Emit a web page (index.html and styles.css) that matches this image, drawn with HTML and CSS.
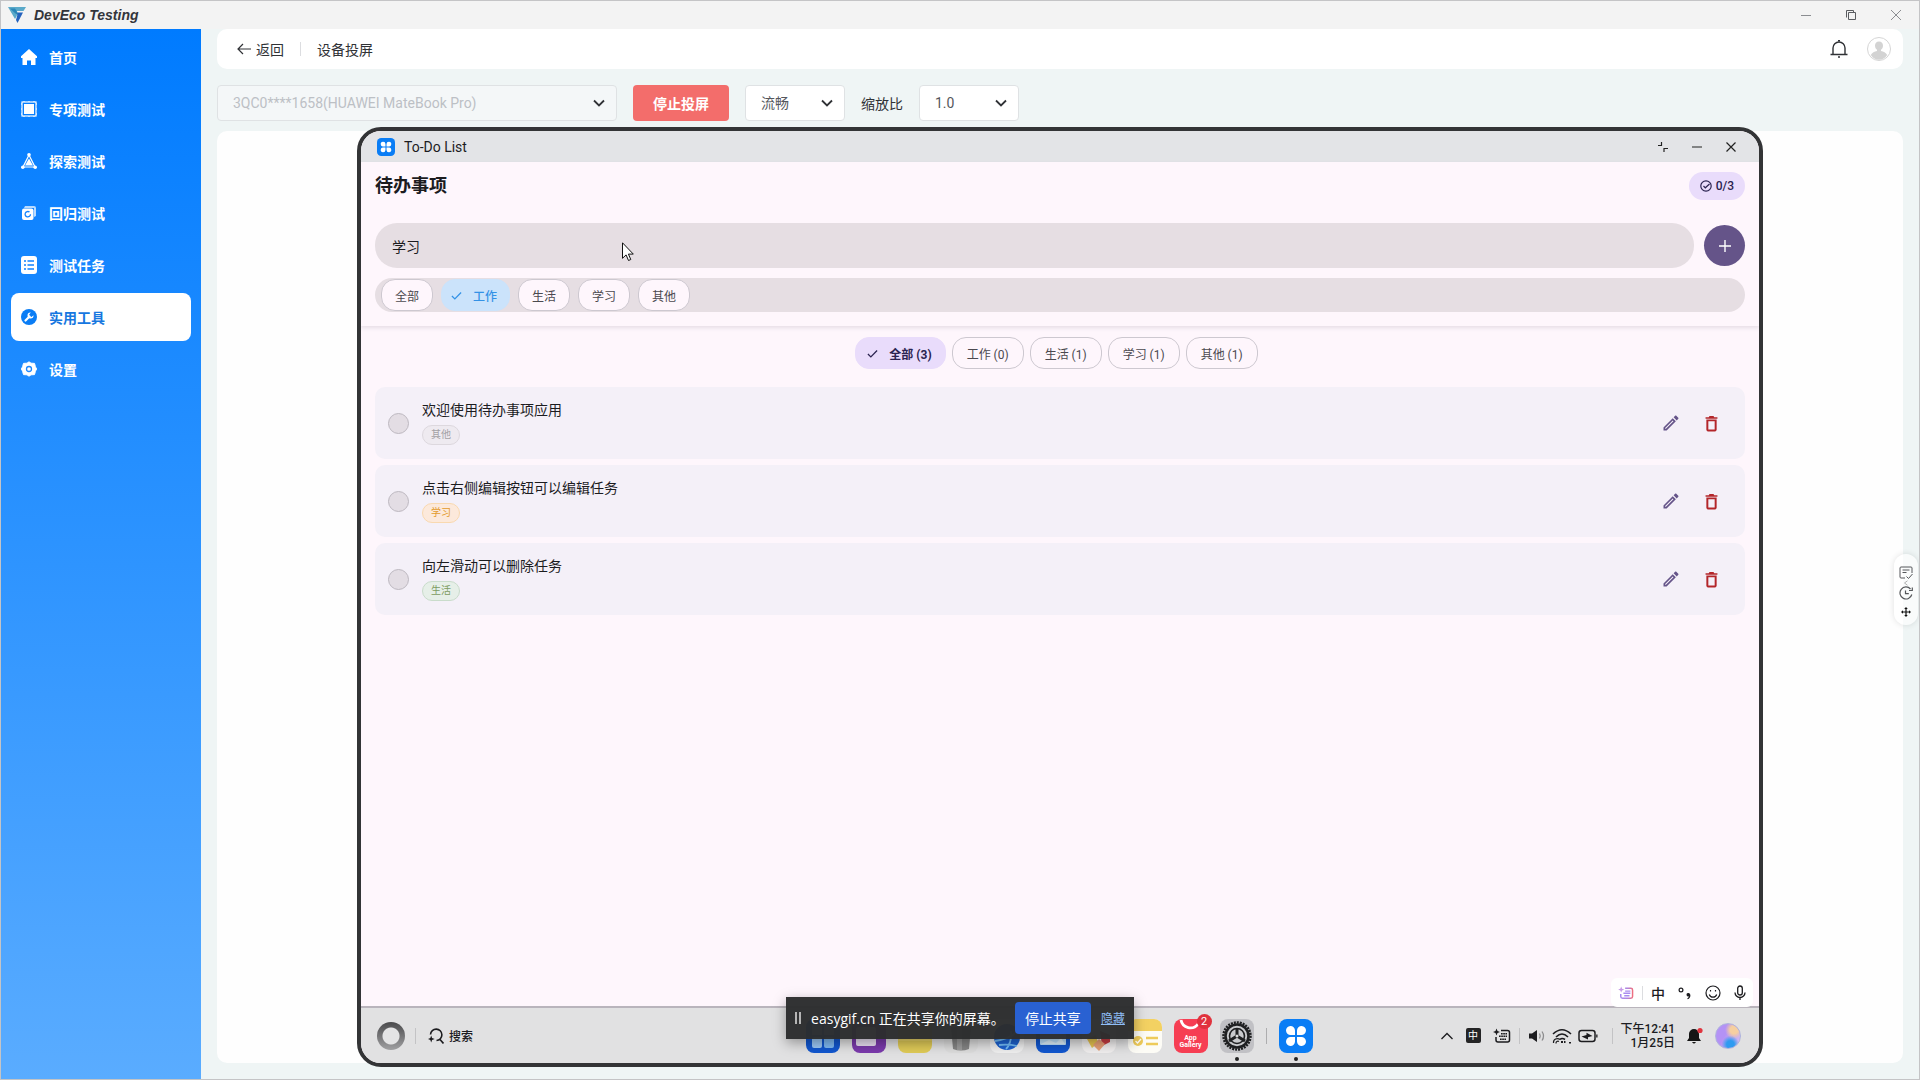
FILE: index.html
```html
<!DOCTYPE html>
<html lang="zh-CN">
<head>
    <meta charset="UTF-8">
    <meta name="viewport" content="width=device-width, initial-scale=1.0">
    <title>DevEco Testing</title>
    <link rel="stylesheet" href="styles.css">
</head>
<body>
    <!-- Shared icons -->
    <svg class="icon-defs" aria-hidden="true">
        <symbol id="i-chevron" viewBox="0 0 12 12"><path d="M1 3.5l5 5 5-5" fill="none" stroke="currentColor" stroke-width="1.8"/></symbol>
        <symbol id="i-check" viewBox="0 0 12 12"><path d="M1 6.5l3.2 3.2L11 2.8" fill="none" stroke="currentColor" stroke-width="1.4"/></symbol>
        <symbol id="i-edit" viewBox="0 0 24 24"><path d="M14.06 9.02l.92.92L5.92 19H5v-.92l9.06-9.06M17.66 3c-.25 0-.51.1-.7.29l-1.83 1.83 3.75 3.75 1.83-1.83a.996.996 0 0 0 0-1.41l-2.34-2.34c-.2-.2-.45-.29-.71-.29zm-3.6 3.19L3 17.25V21h3.75L17.81 9.94l-3.75-3.75z" fill="currentColor"/></symbol>
        <symbol id="i-trash" viewBox="0 0 24 24"><path fill-rule="evenodd" d="M5.500 20c0 1 .9 2 2 2h9c1.100 0 2-1 2-2V7h-13zM8 9.300h8v10.400H8zM15.500 4l-1-1.500h-5l-1 1.500h-4v2h15V4z" fill="currentColor"/></symbol>
        <symbol id="i-apps" viewBox="0 0 34 34">
            <rect width="34" height="34" rx="8" fill="#0a7df5"/>
            <g fill="#fff"><path d="M16 16h-4a4.500 4.500 0 1 1 4-4.500z"/><path d="M18 16h4a4.500 4.500 0 1 0-4-4.500z"/><path d="M16 18h-4a4.500 4.500 0 1 0 4 4.500z"/><path d="M18 18h4a4.500 4.500 0 1 1-4 4.500z"/></g>
        </symbol>
        <symbol id="i-keyboard" viewBox="0 0 18 16"><path d="M8 2.500h6.500a2 2 0 0 1 2 2v7.500a2 2 0 0 1-2 2H5a2 2 0 0 1-2-2V9" fill="none" stroke="currentColor" stroke-width="1.500"/><path d="M3.500.5l1 2.500 2.500 1-2.500 1-1 2.500-1-2.500L0 4l2.500-1z" fill="currentColor"/><path d="M8 5.800h6M6 8.300h8M7 11.200h6" stroke="currentColor" stroke-width="1.400" stroke-dasharray="1.700 .5"/></symbol>
        <linearGradient id="ime-gradient"><stop offset="0" stop-color="#a98bf0"/><stop offset="0.6" stop-color="#b184dd"/><stop offset="1" stop-color="#ee6f80"/></linearGradient>
    </svg>

    <header class="titlebar">
        <div class="brand">
            <svg width="18" height="16" viewBox="0 0 18 16">
                <path d="M0 0h18l-2.500 4H6.500L9 8.500 7 12z" fill="#5aa9c9"/>
                <path d="M2 1.500h5l4 6-2 .5z" fill="#2b86b8"/>
                <path d="M10 5.500h5L9.500 16 8 13z" fill="#2462bd"/>
            </svg>
            <h1>DevEco Testing</h1>
        </div>
        <div class="window-controls">
            <button type="button" aria-label="最小化"><svg width="12" height="12" viewBox="0 0 12 12"><path d="M1 6.500h10"/></svg></button>
            <button type="button" class="dark" aria-label="还原"><svg width="12" height="12" viewBox="0 0 12 12"><path d="M3.500 3.500h7v7h-7zM1.500 8.500v-7h7v2"/></svg></button>
            <button type="button" aria-label="关闭"><svg width="12" height="12" viewBox="0 0 12 12"><path d="M1 1l10 10M11 1L1 11"/></svg></button>
        </div>
    </header>

    <div class="layout">
        <nav class="sidebar">
            <a href="#home">
                <svg width="16" height="16" viewBox="0 0 16 16"><path d="M8 0L0 7.200V9h1.500v7H6v-4.500h4V16h4.500V9H16V7.200z" fill="#fff"/></svg>
                首页
            </a>
            <a href="#special">
                <svg width="16" height="16" viewBox="0 0 16 16"><rect x="1" y="1" width="14" height="14" fill="none" stroke="#fff" stroke-width="1.200"/><path d="M3 3h10v10H3z" fill="#fff"/><path d="M3 0v1M8 0v1M13 0v1M3 15v1M8 15v1M13 15v1M0 3h1M0 8h1M0 13h1M15 3h1M15 8h1M15 13h1" stroke="#fff"/></svg>
                专项测试
            </a>
            <a href="#explore">
                <svg width="16" height="16" viewBox="0 0 16 16"><path d="M8 2L2 14h12z" fill="none" stroke="#fff" stroke-width="1.200"/><path d="M8 5.500l4 7H4z" fill="#fff"/><circle cx="8" cy="1.800" r="1.800" fill="#fff"/><circle cx="1.800" cy="14.200" r="1.800" fill="#fff"/><circle cx="14.200" cy="14.200" r="1.800" fill="#fff"/></svg>
                探索测试
            </a>
            <a href="#regression">
                <svg width="16" height="16" viewBox="0 0 16 16"><path d="M4 1h9a2 2 0 0 1 2 2v8l-2 1V3H3z" fill="#b9dbff"/><rect x="1" y="3.500" width="11.500" height="11.500" rx="2" fill="#fff"/><path d="M9.500 9.200a2.700 2.700 0 1 1-1-2.100" fill="none" stroke="#1283ff" stroke-width="1.300"/></svg>
                回归测试
            </a>
            <a href="#tasks">
                <svg width="16" height="18" viewBox="0 0 16 18"><rect width="16" height="18" rx="3" fill="#fff"/><path d="M3 5h2M3 9h2M3 13h2M6.500 5H13M6.500 9H13M6.500 13H13" stroke="#1283ff" stroke-width="1.400"/></svg>
                测试任务
            </a>
            <a href="#tools" class="active">
                <svg width="16" height="16" viewBox="0 0 16 16"><circle cx="8" cy="8" r="8" fill="#0a7df5"/><path d="M4.500 11.500l4-4" stroke="#fff" stroke-width="2.200" stroke-linecap="round"/><path d="M9.800 3.500a3 3 0 1 0 2.700 2.800L10.500 8 8.700 7.300 8.200 5.500z" fill="#fff"/></svg>
                实用工具
            </a>
            <a href="#settings">
                <svg width="16" height="16" viewBox="0 0 16 16"><path d="M8 .8l2 1.400 3.500.2.900 3.300L15.600 8l-1.200 2.300-.9 3.300-3.500.2-2 1.400-2-1.400-3.500-.2-.9-3.300L.4 8l1.200-2.300.9-3.300L6 2.200z" fill="#fff" stroke="#fff" stroke-linejoin="round"/><circle cx="8" cy="8" r="2.500" fill="none" stroke="#1e88ff" stroke-width="1.300"/></svg>
                设置
            </a>
        </nav>

        <main class="content">
            <div class="page-header">
                <button type="button" class="back">
                    <svg width="14" height="12" viewBox="0 0 14 12"><path d="M14 6H1M6 1L1 6l5 5" fill="none" stroke="currentColor" stroke-width="1.200"/></svg>
                    返回
                </button>
                <span class="divider"></span>
                <h2>设备投屏</h2>
                <button type="button" class="bell" aria-label="通知">
                    <svg width="18" height="18" viewBox="0 0 18 18"><path d="M3 14.500V8a6 6 0 0 1 12 0v6.500M.5 14.500h17" fill="none" stroke="currentColor" stroke-width="1.400"/><path d="M8 .8h2M8 17h2" stroke="currentColor" stroke-width="1.400"/></svg>
                </button>
                <svg class="avatar" width="24" height="24" viewBox="0 0 24 24"><circle cx="12" cy="12" r="11.500" fill="#fff" stroke="#d5d5d5"/><path d="M12 4.500c-2.600 0-4 1.800-4 4.200 0 1.800.9 3.200 2 4v1.200c-2.500.6-5 1.600-6.200 4.100A10.500 10.500 0 0 0 12 22.800a10.500 10.500 0 0 0 8.200-4.800c-1.200-2.500-3.700-3.500-6.200-4.100v-1.200c1.100-.8 2-2.200 2-4 0-2.400-1.400-4.200-4-4.200z" fill="#d3d3d3"/></svg>
            </div>

            <div class="toolbar">
                <div class="select device-select">
                    <select aria-label="设备" disabled><option>3QC0****1658(HUAWEI MateBook Pro)</option></select>
                    <svg width="12" height="12"><use href="#i-chevron"/></svg>
                </div>
                <button type="button" class="stop-btn">停止投屏</button>
                <div class="select">
                    <select aria-label="画质"><option>流畅</option></select>
                    <svg width="12" height="12"><use href="#i-chevron"/></svg>
                </div>
                <label for="scale">缩放比</label>
                <div class="select">
                    <select id="scale"><option>1.0</option></select>
                    <svg width="12" height="12"><use href="#i-chevron"/></svg>
                </div>
            </div>

            <div class="stage">
                <div class="device">
                    <div class="app-bar">
                        <svg width="18" height="18"><use href="#i-apps"/></svg>
                        <span>To-Do List</span>
                        <div class="app-controls">
                            <button type="button" aria-label="退出全屏"><svg width="12" height="12" viewBox="0 0 12 12"><path d="M1 4.500h3.500V1M7 11V7.500h4"/></svg></button>
                            <button type="button" aria-label="最小化"><svg width="12" height="12" viewBox="0 0 12 12"><path d="M1 6h10"/></svg></button>
                            <button type="button" aria-label="关闭"><svg width="12" height="12" viewBox="0 0 12 12"><path d="M1.500 1.500l9 9M10.500 1.500l-9 9"/></svg></button>
                        </div>
                    </div>

                    <div class="app">
                        <section class="app-head">
                            <div class="title-row">
                                <h3>待办事项</h3>
                                <span class="badge">
                                    <svg width="12" height="12" viewBox="0 0 12 12"><circle cx="6" cy="6" r="5.200" fill="none" stroke="currentColor" stroke-width="1.200"/><path d="M3.500 6l1.800 1.800L9.500 4" fill="none" stroke="currentColor" stroke-width="1.200"/></svg>
                                    0/3
                                </span>
                            </div>
                            <form class="add-row">
                                <input type="text" value="学习" aria-label="待办内容">
                                <button type="button" aria-label="添加"><svg width="12" height="12" viewBox="0 0 12 12"><path d="M6 0v12M0 6h12" stroke="#fff" stroke-width="1.400"/></svg></button>
                            </form>
                            <div class="category-row">
                                <button type="button" class="chip">全部</button>
                                <button type="button" class="chip picked"><svg width="11" height="11"><use href="#i-check"/></svg>工作</button>
                                <button type="button" class="chip">生活</button>
                                <button type="button" class="chip">学习</button>
                                <button type="button" class="chip">其他</button>
                            </div>
                        </section>

                        <div class="filter-row">
                            <button type="button" class="chip current"><svg width="11" height="11"><use href="#i-check"/></svg>全部 (3)</button>
                            <button type="button" class="chip">工作 (0)</button>
                            <button type="button" class="chip">生活 (1)</button>
                            <button type="button" class="chip">学习 (1)</button>
                            <button type="button" class="chip">其他 (1)</button>
                        </div>

                        <ul class="todo-list">
                            <li>
                                <input type="checkbox" id="todo-1">
                                <div class="todo-text">
                                    <label for="todo-1">欢迎使用待办事项应用</label>
                                    <span class="tag other">其他</span>
                                </div>
                                <button type="button" class="edit" aria-label="编辑"><svg width="20" height="20"><use href="#i-edit"/></svg></button>
                                <button type="button" class="delete" aria-label="删除"><svg width="19" height="19"><use href="#i-trash"/></svg></button>
                            </li>
                            <li>
                                <input type="checkbox" id="todo-2">
                                <div class="todo-text">
                                    <label for="todo-2">点击右侧编辑按钮可以编辑任务</label>
                                    <span class="tag study">学习</span>
                                </div>
                                <button type="button" class="edit" aria-label="编辑"><svg width="20" height="20"><use href="#i-edit"/></svg></button>
                                <button type="button" class="delete" aria-label="删除"><svg width="19" height="19"><use href="#i-trash"/></svg></button>
                            </li>
                            <li>
                                <input type="checkbox" id="todo-3">
                                <div class="todo-text">
                                    <label for="todo-3">向左滑动可以删除任务</label>
                                    <span class="tag life">生活</span>
                                </div>
                                <button type="button" class="edit" aria-label="编辑"><svg width="20" height="20"><use href="#i-edit"/></svg></button>
                                <button type="button" class="delete" aria-label="删除"><svg width="19" height="19"><use href="#i-trash"/></svg></button>
                            </li>
                        </ul>
                    </div>

                    <!-- Input method bar -->
                    <div class="ime-bar">
                        <svg width="16" height="14" viewBox="0 0 18 16"><path d="M8 2.500h6.500a2 2 0 0 1 2 2v7.500a2 2 0 0 1-2 2H5a2 2 0 0 1-2-2V9" fill="none" stroke="url(#ime-gradient)" stroke-width="1.700"/><path d="M3.500.5l1 2.500 2.500 1-2.500 1-1 2.500-1-2.500L0 4l2.500-1z" fill="#c79be8"/><path d="M8 5.800h6M6 8.300h8M7 11.200h6" stroke="#a98bf0" stroke-width="1.600"/></svg>
                        <span class="divider"></span>
                        <span class="ime-lang">中</span>
                        <svg width="14" height="14" viewBox="0 0 14 14"><circle cx="3" cy="4" r="1.900" fill="none" stroke="currentColor" stroke-width="1.200"/><path d="M10.500 7a1.700 1.700 0 1 0 .2 3.300c0 1-.6 1.700-1.500 2.100l.5.900c1.700-.7 2.700-2.100 2.700-3.900C12.400 8 11.600 7 10.500 7z" fill="currentColor"/></svg>
                        <svg width="16" height="16" viewBox="0 0 16 16" fill="none" stroke="currentColor" stroke-width="1.200"><circle cx="8" cy="8" r="7"/><path d="M4.300 9.500a3.900 3.900 0 0 0 7.400 0M5.500 5v1.500M10.500 5v1.500"/></svg>
                        <svg width="12" height="16" viewBox="0 0 12 16" fill="none" stroke="currentColor" stroke-width="1.300"><rect x="3.700" y="1" width="4.600" height="9" rx="2.300"/><path d="M1 7.500a5 5 0 0 0 10 0M6 12.500V15"/></svg>
                    </div>

                    <footer class="taskbar">
                        <div class="task-left">
                            <span class="ring"></span>
                            <span class="divider"></span>
                            <button type="button" class="search">
                                <svg width="16" height="16" viewBox="0 0 16 16"><path d="M2.500 6.500a5.700 5.700 0 1 1 6 6M12 11.500l3.500 4" fill="none" stroke="currentColor" stroke-width="1.600"/><path d="M3.200 7.500l.9 2.600 2.600.9-2.600.9-.9 2.600-.9-2.600L0 11l2.300-.9z" fill="currentColor"/></svg>
                                搜索
                            </button>
                        </div>

                        <div class="dock">
                            <svg viewBox="0 0 34 34"><rect width="34" height="34" rx="8" fill="#1257cf"/><path d="M6 6h10v10H6zM18 6h10v10H18z" fill="#7fb4f0"/><rect x="6" y="18" width="10" height="11" rx="2" fill="#9cc8f5"/><rect x="18" y="18" width="10" height="11" rx="2" fill="#7fb9f2"/></svg>
                            <svg viewBox="0 0 34 34"><rect width="34" height="34" rx="8" fill="#7b3aac"/><rect x="4" y="8" width="20" height="19" rx="2" fill="#e9dff2"/></svg>
                            <svg viewBox="0 0 34 34"><rect width="34" height="34" rx="8" fill="#dfca57"/><path d="M0 8a8 8 0 0 1 8-8h18a8 8 0 0 1 8 8v14H0z" fill="#e7d267"/></svg>
                            <svg viewBox="0 0 34 34"><rect width="34" height="34" rx="8" fill="#dcdcdc"/><path d="M7 8h20l-2 22q-8 3-16 0z" fill="#858585"/><path d="M13 8h5v23h-5z" fill="#9c9c9c"/></svg>
                            <svg viewBox="0 0 34 34"><rect width="34" height="34" rx="8" fill="#efefef"/><circle cx="17" cy="18" r="13" fill="#1d62d0"/><path d="M5 22q14-2 23-10M16 30q6-6 5-18M9 26q10-1 18 1" fill="none" stroke="#74bdf8" stroke-width="1.800"/></svg>
                            <svg viewBox="0 0 34 34"><rect width="34" height="34" rx="8" fill="#1257cf"/><rect x="4" y="8" width="26" height="18" rx="1" fill="#bfe1fa"/><path d="M5 25l8-4 7 3 5-5 4 6z" fill="#dff1fc"/></svg>
                            <svg viewBox="0 0 34 34"><rect width="34" height="34" rx="8" fill="#f0eeee"/><path d="M5 20l9-4 2 8-6 5z" fill="#e6c350"/><path d="M18 12l10 4v7l-8 4z" fill="#c93d43"/><path d="M17 20l6 5-6 7-6-6z" fill="#e6a077"/></svg>
                            <svg viewBox="0 0 34 34"><rect width="34" height="34" rx="8" fill="#fdfcf6"/><path d="M0 12V8a8 8 0 0 1 8-8h18a8 8 0 0 1 8 8v4z" fill="#f3d162"/><circle cx="10" cy="22" r="5" fill="#eecb5a"/><path d="M7.500 22l2 2 3.500-4" fill="none" stroke="#fff" stroke-width="1.300"/><path d="M18 19h12M18 25h12" stroke="#eecb5a" stroke-width="2.400"/></svg>
                            <div class="gallery">
                                <svg viewBox="0 0 34 34"><rect width="34" height="34" rx="8" fill="#f63e53"/><path d="M7 1a9.500 9.500 0 0 0 17 4" fill="none" stroke="#fff" stroke-width="2.800"/></svg>
                                <span class="gallery-name">App<br>Gallery</span>
                                <span class="count">2</span>
                            </div>
                            <div class="running">
                                <svg viewBox="0 0 34 34"><rect width="34" height="34" rx="8" fill="#c1c1c5"/><circle cx="17" cy="17" r="13.500" fill="none" stroke="#1f2022" stroke-width="2.500" stroke-dasharray="2 1"/><circle cx="17" cy="17" r="11.500" fill="#c9cacd" stroke="#1f2022" stroke-width="2.600"/><circle cx="17" cy="17" r="7.500" fill="none" stroke="#1f2022" stroke-width="1.600"/><path d="M17 17V9M17 17l-8 5M17 17l8 5" stroke="#1f2022" stroke-width="3"/><circle cx="17" cy="17" r="1.500" fill="#ddd"/></svg>
                            </div>
                            <span class="divider"></span>
                            <div class="running"><svg><use href="#i-apps"/></svg></div>
                        </div>

                        <div class="tray">
                            <svg width="14" height="14" viewBox="0 0 14 14"><path d="M1.500 10L7 4.500l5.500 5.500" fill="none" stroke="currentColor" stroke-width="1.300"/></svg>
                            <span class="tray-lang">中</span>
                            <svg width="18" height="16"><use href="#i-keyboard"/></svg>
                            <span class="divider"></span>
                            <div class="tray-status">
                                <svg width="18" height="14" viewBox="0 0 18 14"><path d="M1 4.500h3L9 1v12L4 9.500H1z" fill="currentColor"/><path d="M11.500 4.500q1.500 2.500 0 5M14 2.500q3 4.500 0 9" fill="none" stroke="#8d8d8f" stroke-width="1.300"/></svg>
                                <svg width="20" height="16" viewBox="0 0 20 16" fill="none" stroke="currentColor" stroke-width="1.600"><path d="M1 6q9-8.500 18 0M4 9q6-6 12 0"/><path d="M8 11.500q2-2 5 0"/><path d="M1.500 15a4 4 0 0 1 6.500-3.500M4 15.500a2 2 0 0 1 3-2" stroke-width="1.200"/><path d="M10 13v2M12 14h1.500M18 14v1.500" stroke-width="2"/></svg>
                                <svg width="20" height="14" viewBox="0 0 20 14"><rect x="1" y="1.500" width="16" height="11" rx="2.500" fill="none" stroke="currentColor" stroke-width="1.500"/><path d="M18.200 5.500h1.300v3h-1.300z" fill="currentColor"/><path d="M3.500 7.500l5-1.500V3.800L14.500 7 10 8.200v2.300z" fill="currentColor"/></svg>
                            </div>
                            <span class="divider"></span>
                            <time class="clock">下午12:41<br>1月25日</time>
                            <svg width="16" height="18" viewBox="0 0 16 18"><path d="M7 2a5 5 0 0 1 5 5v4l2 3H0l2-3V7a5 5 0 0 1 5-5zM5 15h4q-2 3-4 0z" fill="#151515"/><circle cx="13" cy="3.500" r="2.600" fill="#e0353f"/></svg>
                            <span class="orb"></span>
                        </div>
                    </footer>
                </div>
            </div>
        </main>
    </div>

    <!-- Floating recorder tools -->
    <aside class="float-tools">
        <svg width="14" height="14" viewBox="0 0 14 14" fill="none" stroke="currentColor"><path d="M6 12H2a1 1 0 0 1-1-1V2a1 1 0 0 1 1-1h10a1 1 0 0 1 1 1v5M3.500 4h7M3.500 6.500h4M7.500 10.500l2 2L13.500 8"/></svg>
        <svg width="6" height="6" viewBox="0 0 6 8" fill="none" stroke="#999"><path d="M5 1L1 4l4 3"/></svg>
        <svg width="14" height="14" viewBox="0 0 14 14" fill="none" stroke="currentColor" stroke-width="1.200"><path d="M12.800 8.500A6 6 0 1 1 11.500 3M10 4.500h3.300V1.500M6.500 4.500v3.200h3.300"/></svg>
        <svg class="move" width="10" height="10" viewBox="0 0 10 10"><path d="M5 0l1.800 2h-1.200v2.400H8V3.200L10 5 8 6.800V5.600H5.600V8h1.200L5 10 3.200 8h1.200V5.600H2v1.200L0 5l2-1.800v1.200h2.400V2H3.200z" fill="#111"/></svg>
    </aside>

    <!-- Screen sharing notice -->
    <div class="share-bar">
        <span class="grip"></span>
        <span>easygif.cn 正在共享你的屏幕。</span>
        <button type="button">停止共享</button>
        <a href="#hide">隐藏</a>
    </div>

    <svg class="cursor" width="12" height="20" viewBox="0 0 12 20"><path d="M.5.800v15.500l3.600-3.400 2.400 5.600 2.300-1-2.400-5.400h4.900z" fill="#fff" stroke="#111"/></svg>
</body>
</html>
```
FILE: styles.css
```css
* {
    box-sizing: border-box;
}

body {
    font-family: Roboto, "Noto Sans CJK SC", sans-serif;
    font-size: 14px;
    margin: 0;
    height: 100vh;
    display: flex;
    flex-direction: column;
    position: relative;
    overflow: hidden;
    border: 1px solid #c4c4c6;
    background-color: #eff5f5;
    color: #303236;
}

h1, h2, h3, ul {
    margin: 0;
    padding: 0;
}

button, input, select {
    font-family: inherit;
    color: inherit;
}

button {
    display: flex;
    align-items: center;
    justify-content: center;
    padding: 0;
    border: none;
    background: none;
    cursor: pointer;
}

svg {
    display: block;
    flex-shrink: 0;
}

.icon-defs {
    position: absolute;
    width: 0;
    height: 0;
}

.divider {
    width: 1px;
    height: 14px;
    background-color: #dcdde0;
}

/* Window title bar */
.titlebar {
    display: flex;
    justify-content: space-between;
    height: 28px;
    background-color: #f3f3f3;
}

.brand {
    display: flex;
    align-items: center;
    gap: 8px;
    padding-left: 7px;
}

.brand h1 {
    font-family: "Liberation Sans", sans-serif;
    font-size: 14px;
    font-style: italic;
    color: #33353b;
}

.window-controls {
    display: flex;
    padding-right: 1px;
}

.window-controls button {
    width: 45px;
}

.window-controls path {
    fill: none;
    stroke: #8b8d91;
}

.window-controls .dark path {
    stroke: #5a5c60;
}

/* Sidebar */
.layout {
    flex: 1;
    display: flex;
    min-height: 0;
}

.sidebar {
    width: 200px;
    padding: 4px 10px;
    display: flex;
    flex-direction: column;
    gap: 4px;
    background: linear-gradient(#007bff, #5aacff);
}

.sidebar a {
    display: flex;
    align-items: center;
    gap: 12px;
    height: 48px;
    padding-left: 10px;
    border-radius: 8px;
    color: #fff;
    font-weight: bold;
    text-decoration: none;
}

.sidebar a.active {
    background-color: #fff;
    color: #1677e0;
}

/* Content */
.content {
    flex: 1;
    min-width: 0;
    display: flex;
    flex-direction: column;
    padding: 0 16px;
}

.page-header {
    display: flex;
    align-items: center;
    height: 40px;
    padding: 0 12px 0 20px;
    border-radius: 10px;
    background-color: #fff;
}

.back {
    gap: 5px;
    font-size: 14px;
}

.page-header .divider {
    margin: 0 16px;
}

.page-header h2 {
    font-size: 14px;
    font-weight: normal;
}

.bell {
    margin-left: auto;
    margin-right: 19px;
}

.toolbar {
    display: flex;
    align-items: center;
    gap: 16px;
    margin: 16px 0 10px;
}

.select {
    position: relative;
    width: 100px;
    height: 36px;
}

.select select {
    appearance: none;
    width: 100%;
    height: 100%;
    padding: 0 15px;
    border: 1px solid #dfe2e4;
    border-radius: 4px;
    background-color: #fff;
    font-size: 14px;
    color: #55575c;
    opacity: 1;
}

.select svg {
    position: absolute;
    right: 12px;
    top: 12px;
    pointer-events: none;
}

.select.device-select {
    width: 400px;
}

.device-select select {
    background-color: #f4f7f8;
    color: #bcc0c5;
}

.stop-btn {
    width: 96px;
    height: 36px;
    border-radius: 4px;
    background-color: #f36d6b;
    color: #fff;
    font-size: 14px;
    font-weight: bold;
}

.stage {
    flex: 1;
    display: flex;
    min-height: 0;
    margin-bottom: 16px;
    padding: 0 140px;
    border-radius: 10px;
    background-color: #fefefe;
}

/* Mirrored device */
.device {
    flex: 1;
    display: flex;
    flex-direction: column;
    position: relative;
    margin: -4px 0;
    border: 4px solid #333436;
    border-radius: 24px;
    overflow: hidden;
    background-color: #fef6fc;
    color: #1c1c1f;
}

.app-bar {
    display: flex;
    align-items: center;
    gap: 9px;
    height: 31px;
    padding: 0 11px 0 16px;
    background-color: #e3e4e7;
}

.app-controls {
    display: flex;
    margin-left: auto;
}

.app-controls button {
    width: 34px;
    height: 30px;
}

.app-controls path {
    fill: none;
    stroke: #222;
    stroke-width: 1.2;
}

.app {
    flex: 1;
}

.app-head {
    padding: 10px 14px 14px;
    box-shadow: 0 2px 4px rgba(60, 50, 70, 0.12);
}

.title-row {
    display: flex;
    align-items: center;
    justify-content: space-between;
    height: 28px;
    margin-bottom: 23px;
}

.title-row h3 {
    font-size: 18px;
    line-height: 24px;
    font-weight: bold;
}

.badge {
    display: flex;
    align-items: center;
    gap: 4px;
    height: 28px;
    padding: 0 11px;
    border-radius: 14px;
    background-color: #e9dcfb;
    color: #2b2350;
    font-size: 12px;
    font-weight: 500;
}

.add-row {
    display: flex;
    align-items: center;
    gap: 10px;
    margin-bottom: 10px;
}

.add-row input {
    flex: 1;
    height: 45px;
    padding: 0 17px;
    border: none;
    border-radius: 22px;
    background-color: #e6dee3;
    font-size: 14px;
}

.add-row button {
    width: 41px;
    height: 41px;
    border-radius: 50%;
    background-color: #655489;
}

.category-row {
    display: flex;
    align-items: center;
    gap: 8px;
    height: 34px;
    padding: 0 6px;
    border-radius: 17px;
    background-color: #e6dee3;
}

.chip {
    height: 32px;
    padding: 0 13px;
    border: 1px solid #cdc8d0;
    border-radius: 14px;
    background-color: #fef6fc;
    color: #4b494f;
    font-size: 12px;
}

.chip svg {
    margin-right: 11px;
}

.chip.picked {
    padding: 0 12px 0 9px;
    border-color: #cbe3fb;
    background-color: #cbe3fb;
    color: #3492e6;
    font-weight: 500;
}

.filter-row {
    display: flex;
    justify-content: center;
    gap: 6px;
    margin: 11px 0 18px;
    padding-right: 7px;
}

.filter-row .chip {
    min-width: 72px;
}

.chip.current {
    padding: 0 13px 0 11px;
    border-color: #e9dcfb;
    background-color: #e9dcfb;
    color: #2b2350;
    font-weight: bold;
}

.todo-list {
    display: flex;
    flex-direction: column;
    gap: 6px;
    padding: 0 14px;
    list-style: none;
}

.todo-list li {
    display: flex;
    align-items: center;
    height: 72px;
    padding: 0 13px;
    border-radius: 10px;
    background-color: #f4f0f8;
}

.todo-list input {
    appearance: none;
    width: 21px;
    height: 21px;
    margin: 0 13px 0 0;
    border: 1px solid #bdb8c0;
    border-radius: 50%;
    background-color: #e3dde4;
}

.todo-text {
    flex: 1;
    display: flex;
    flex-direction: column;
    align-items: flex-start;
    gap: 6px;
    line-height: 18px;
}

.tag {
    height: 20px;
    padding: 0 8px;
    border: 1px solid;
    border-radius: 10px;
    font-size: 10px;
    line-height: 18px;
}

.tag.other {
    border-color: #ddd8de;
    background-color: #eeeaf0;
    color: #a3a1a5;
}

.tag.study {
    border-color: #f9d9b0;
    background-color: #fce9db;
    color: #e39a2c;
}

.tag.life {
    border-color: #c9dccb;
    background-color: #e6efe8;
    color: #7d9c62;
}

.todo-list button {
    width: 41px;
    height: 40px;
}

.edit {
    color: #655489;
}

.delete {
    color: #b3262a;
}

.ime-bar {
    position: absolute;
    right: 6px;
    bottom: 56px;
    display: flex;
    align-items: center;
    gap: 13px;
    height: 29px;
    padding: 0 7px;
    border-radius: 6px;
    background-color: #fff;
}

.ime-bar .divider {
    margin: 0 -5px;
}

.ime-lang {
    font-weight: 500;
}

/* Device taskbar */
.taskbar {
    display: grid;
    grid-template-columns: 1fr auto 1fr;
    align-items: center;
    height: 57px;
    padding: 0 18px 0 16px;
    border-top: 2px solid #b9b4bc;
    background-color: #e1e1e2;
}

.taskbar .divider {
    height: 16px;
    background-color: #c3c3c5;
}

.task-left {
    display: flex;
    align-items: center;
    gap: 10px;
}

.ring {
    width: 28px;
    height: 28px;
    border-radius: 50%;
    background: radial-gradient(#e4e4e5 0 8px, transparent 9px), linear-gradient(#4a4a4c, #a0a0a2);
}

.search {
    gap: 5px;
    margin-left: 2px;
    font-size: 12px;
    font-weight: 500;
}

.dock {
    display: flex;
    align-items: center;
    gap: 12px;
}

.dock svg {
    width: 34px;
    height: 34px;
}

.dock .divider {
    background-color: #adadaf;
}

.gallery, .running {
    position: relative;
}

.gallery-name {
    position: absolute;
    left: 0;
    right: 0;
    top: 16px;
    color: #fff;
    font-size: 7px;
    font-weight: bold;
    line-height: 7px;
    text-align: center;
}

.count {
    position: absolute;
    right: -4px;
    top: -5px;
    width: 15px;
    height: 15px;
    border-radius: 50%;
    background-color: #e0323d;
    color: #fff;
    font-size: 11px;
    line-height: 15px;
    text-align: center;
}

.running::after {
    content: "";
    position: absolute;
    left: 15px;
    bottom: -8px;
    width: 4px;
    height: 4px;
    border-radius: 50%;
    background-color: #222;
}

.tray {
    display: flex;
    align-items: center;
    justify-content: flex-end;
    gap: 12px;
}

.tray .divider {
    margin: 0 -4px;
}

.tray-lang {
    width: 15px;
    height: 15px;
    border-radius: 2px;
    background-color: #242425;
    color: #fff;
    font-size: 10px;
    line-height: 15px;
    text-align: center;
}

.tray-status {
    display: flex;
    align-items: center;
    gap: 6px;
    margin-right: 6px;
}

.clock {
    font-size: 12px;
    font-weight: 500;
    line-height: 14px;
    text-align: right;
}

.orb {
    width: 26px;
    height: 26px;
    border: 1px solid #aeb2dd;
    border-radius: 50%;
    background:
        radial-gradient(circle at 60% 85%, #2f9bf0 0 15%, transparent 35%),
        radial-gradient(circle at 75% 25%, #f6cfa0 0 15%, transparent 35%),
        linear-gradient(120deg, #b492f5 40%, #d9c3f0);
}

/* Overlays */
.float-tools {
    position: absolute;
    right: 1px;
    top: 553px;
    display: flex;
    flex-direction: column;
    align-items: center;
    width: 24px;
    padding: 12px 0 8px;
    border-radius: 12px;
    background-color: rgba(255, 255, 255, 0.6);
    box-shadow: 0 0 6px rgba(0, 0, 0, 0.12);
    color: #55575a;
}

.float-tools .move {
    margin-top: 7px;
}

.share-bar {
    position: absolute;
    left: 0;
    right: 0;
    bottom: 40px;
    width: fit-content;
    margin: 0 auto;
    display: flex;
    align-items: center;
    gap: 10px;
    height: 42px;
    padding: 0 9px;
    background-color: rgba(43, 44, 45, 0.97);
    box-shadow: 0 4px 12px rgba(0, 0, 0, 0.35);
    color: #fff;
    font-family: "Open Sans", "Noto Sans CJK SC", sans-serif;
    font-size: 14px;
}

.grip {
    width: 6px;
    height: 12px;
    border: solid #b5b5b5;
    border-width: 0 2px;
}

.share-bar button {
    width: 76px;
    height: 32px;
    border-radius: 4px;
    background-color: #2961d2;
    font-size: 14px;
}

.share-bar a {
    color: #8fbdf5;
    font-size: 12px;
}

.cursor {
    position: absolute;
    left: 621px;
    top: 241px;
}
```
